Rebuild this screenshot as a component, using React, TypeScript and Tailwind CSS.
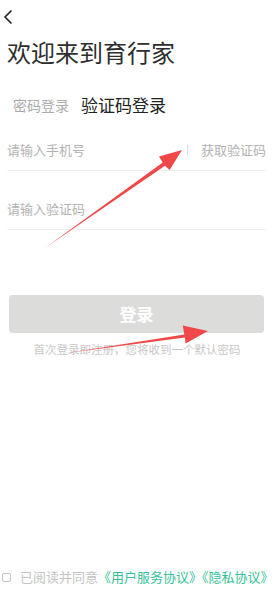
import React from "react";

export default function App() {
  return (
    <div className="relative w-[274px] h-[600px] bg-white flex flex-col font-['Noto_Sans_CJK_SC','Noto_Sans',sans-serif] overflow-hidden">
      <div className="h-[32px] pl-[2px] pt-[9px]">
        <svg width="14" height="16" viewBox="0 0 14 16">
          <polyline points="9.5,1.5 3,8 9.5,14.5" fill="none" stroke="#222" strokeWidth="1.6" />
        </svg>
      </div>
      <div className="mt-[4px] pl-[7px] text-[24px] leading-[32px] text-[#2e2e2e]">欢迎来到育行家</div>
      <div className="mt-[23px] h-[28px] flex items-center pl-[13px]">
        <span className="text-[14px] text-[#ababab]">密码登录</span>
        <span className="ml-[12px] text-[17px] text-[#222]">验证码登录</span>
      </div>
      <div className="mt-[10px] ml-[7px] mr-[8px] h-[42px] border-b border-[#f0f0f0] flex items-center">
        <span className="text-[13px] text-[#b3b3b3]">请输入手机号</span>
        <div className="ml-auto w-px h-[10px] bg-[#dedede]" />
        <span className="ml-[13px] text-[13px] text-[#b3b3b3]">获取验证码</span>
      </div>
      <div className="mt-[17px] ml-[7px] mr-[8px] h-[42px] border-b border-[#f0f0f0] flex items-center">
        <span className="text-[13px] text-[#b3b3b3]">请输入验证码</span>
      </div>
      <div className="mt-[65px] ml-[9px] mr-[10px] h-[38px] rounded-[4px] bg-[#dcdddb] flex items-center justify-center">
        <span className="text-[17px] font-bold text-white">登录</span>
      </div>
      <div className="mt-[8px] text-center text-[11.5px] leading-[16px] text-[#c8c8c8]">首次登录即注册，您将收到一个默认密码</div>
      <div className="mt-auto mb-[14px] h-[18px] flex items-center">
        <div className="ml-[2px] w-[9px] h-[9px] border border-[#c4c4c4] rounded-[2px]" />
        <span className="ml-[9px] text-[13px] leading-[18px] text-[#c4c4c4] whitespace-nowrap">
          已阅读并同意<span className="text-[#36bf98]">《用户服务协议》《隐私协议》</span>
        </span>
      </div>
      <svg className="absolute inset-0 pointer-events-none" width="274" height="600" viewBox="0 0 274 600">
        <polygon points="45,248 162.7,162.6 159,156.5 182,150 169.6,169.9 165,165.8" fill="#f04848" />
        <polygon points="67,353 184.3,334.5 182.8,325.6 208,331 185.6,343.4 184.9,337.5" fill="#f04848" />
      </svg>
    </div>
  );
}
